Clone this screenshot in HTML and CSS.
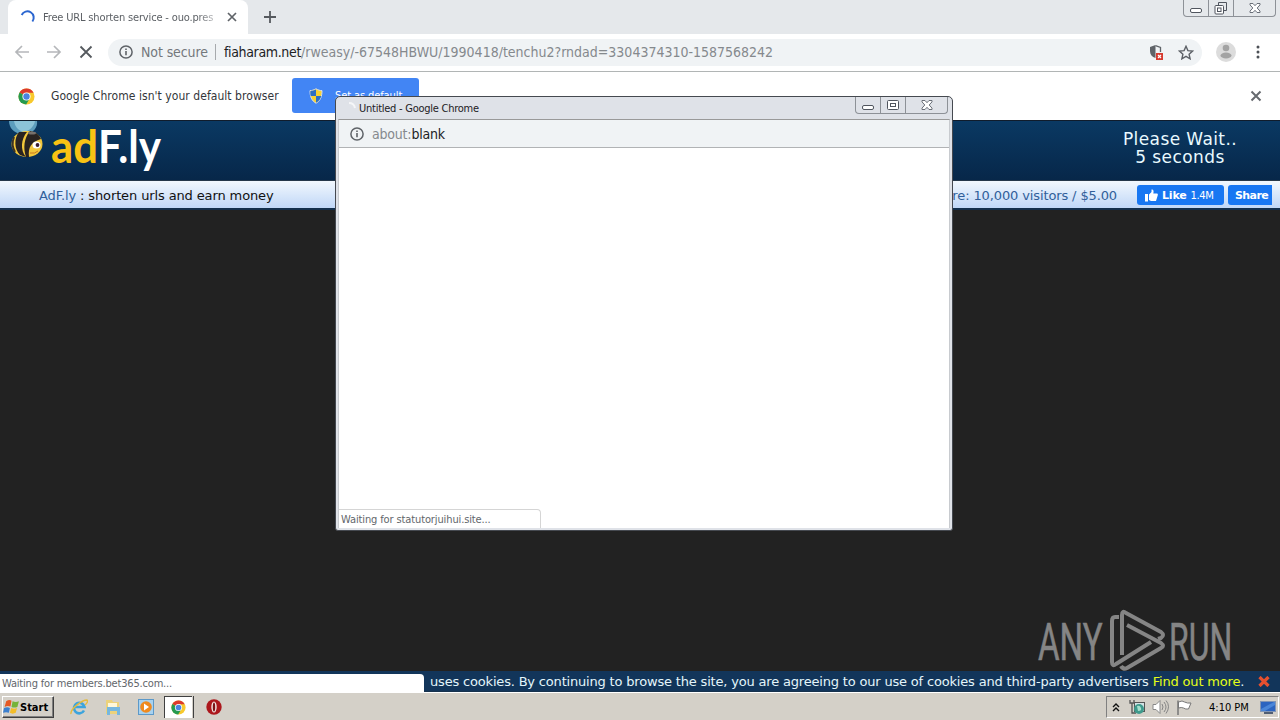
FILE: index.html
```html
<!DOCTYPE html>
<html lang="en">
<head>
    <meta charset="UTF-8">
    <title>Free URL shorten service - ouo.press</title>
    <link rel="stylesheet" href="styles.css">
</head>
<body>
    <svg width="0" height="0" class="defs">
        <defs>
            <symbol id="chrome" viewBox="0 0 18 18">
                <circle cx="9" cy="9" r="8.5" fill="#f8c92c"/>
                <path d="M9 9L1.6 4.8A8.5 8.5 0 0 1 16.5 5H9z" fill="#dc3a2c"/>
                <path d="M9 9L1.6 4.8A8.5 8.5 0 0 0 8.6 17.5L12.4 11z" fill="#259a50"/>
                <circle cx="9" cy="9" r="4.3" fill="#fff"/>
                <circle cx="9" cy="9" r="3.4" fill="#4a84e0"/>
            </symbol>
            <symbol id="info" viewBox="0 0 14 14">
                <circle cx="7" cy="7" r="6.1" fill="none" stroke="#5f6368" stroke-width="1.5"/>
                <path d="M7 6v4.3M7 3.5v1.6" stroke="#5f6368" stroke-width="1.6"/>
            </symbol>
            <symbol id="winx" viewBox="0 0 12 10">
                <path d="M1 .5h3l2 2.2 2-2.2h3v1.4L8.2 5 11 8.1v1.4H8L6 7.3 4 9.5H1V8.1L3.8 5 1 1.9z" fill="#fff" stroke="#6a6f78" stroke-width="1"/>
            </symbol>
        </defs>
    </svg>

    <div class="desktop">
        <div class="tabstrip">
            <div class="tab">
                <svg width="16" height="16" viewBox="0 0 16 16"><path d="M1.7 6A6.3 6.3 0 1 1 12.4 12.5" fill="none" stroke="#2b66d0" stroke-width="2"/></svg>
                <span class="tab-title">Free URL shorten service - ouo.pres</span>
                <svg class="tab-close" width="10" height="10" viewBox="0 0 10 10"><path d="M1 1l8 8M9 1L1 9" stroke="#5f6368" stroke-width="1.7"/></svg>
            </div>
            <svg class="new-tab" width="12" height="12" viewBox="0 0 12 12"><path d="M6 0v12M0 6h12" stroke="#55595e" stroke-width="1.8"/></svg>
            <div class="win-buttons">
                <span><svg width="12" height="5"><rect x=".5" y=".5" width="11" height="4" rx="1.5" fill="#fff" stroke="#50555e"/></svg></span>
                <span class="wb-max"><svg width="14" height="13"><path d="M4.5 3.5v-3h8v8h-3" fill="none" stroke="#50555e"/><rect x="1" y="3.5" width="8.5" height="8.5" rx="1" fill="#fff" stroke="#50555e"/><rect x="3.5" y="6" width="3.5" height="3.5" fill="none" stroke="#50555e"/></svg></span>
                <span class="wb-close"><svg width="12" height="10"><use href="#winx"/></svg></span>
            </div>
        </div>

        <div class="toolbar">
            <svg class="nav" width="16" height="14" viewBox="0 0 16 14"><path d="M15 7H2M8 1L2 7l6 6" fill="none" stroke="#b5b7ba" stroke-width="1.7"/></svg>
            <svg class="nav" width="16" height="14" viewBox="0 0 16 14"><path d="M1 7h13M8 1l6 6-6 6" fill="none" stroke="#b5b7ba" stroke-width="1.7"/></svg>
            <svg class="nav" width="16" height="14" viewBox="0 0 16 14"><path d="M2.5 1.5l11 11M13.500 1.500l-11 11" stroke="#55595e" stroke-width="1.8"/></svg>
            <div class="omnibox">
                <svg width="14" height="14"><use href="#info"/></svg>
                <span class="secure">Not secure</span>
                <span class="sep"></span>
                <span class="url"><b>fiaharam.net</b><i>/rweasy/-67548HBWU/1990418/tenchu2?rndad=3304374310-1587568242</i></span>
                <svg class="shield" width="14" height="16" viewBox="0 0 14 16"><path d="M6.5 1L1 3v4c0 3.5 2 6 5.5 7z" fill="#5f6368"/><path d="M6.5 1.7L11.5 3.5V8" fill="none" stroke="#5f6368" stroke-width="1.3"/><rect x="7" y="9" width="7" height="7" fill="#d63a2f"/><path d="M9 11l3 3M12 11l-3 3" stroke="#fff" stroke-width="1.2"/></svg>
                <svg width="16" height="15" viewBox="0 0 16 15"><path d="M8 1.3l1.9 4.3 4.7.5-3.5 3.1 1 4.6L8 11.4l-4.1 2.4 1-4.6L1.4 6.100l4.700-.5z" fill="none" stroke="#5c6066" stroke-width="1.4"/></svg>
            </div>
            <svg class="avatar" width="20" height="20"><circle cx="10" cy="10" r="10" fill="#dcdcdc"/><circle cx="10" cy="6" r="3.3" fill="#a3a3a3"/><ellipse cx="10" cy="13.5" rx="5.5" ry="3" fill="#a3a3a3"/></svg>
            <svg class="dots" width="4" height="14" fill="#4c5056"><circle cx="2" cy="2" r="1.5"/><circle cx="2" cy="7" r="1.5"/><circle cx="2" cy="12" r="1.5"/></svg>
        </div>

        <div class="infobar">
            <svg width="17" height="17"><use href="#chrome"/></svg>
            <span class="infobar-text">Google Chrome isn't your default browser</span>
            <div class="default-btn">
                <svg width="14" height="16" viewBox="0 0 14 16"><path d="M7 .8c2 1.200 4 1.800 6 1.800 0 6-1.500 10-6 12.600C2.500 12.600 1 8.600 1 2.600c2 0 4-.6 6-1.800z" fill="#f7d232" stroke="#d9e1ec"/><path d="M7 1.600V8H1.700C1.300 6.500 1.300 5 1.400 3 3.500 3 5.300 2.500 7 1.600zM7 8h5.300c-.8 3-2.500 5.300-5.300 6.700z" fill="#2d6fc4"/></svg>
                <span>Set as default</span>
            </div>
            <svg class="infobar-close" width="12" height="12" viewBox="0 0 12 12"><path d="M1.500 1.500l9 9M10.500 1.500l-9 9" stroke="#666a6f" stroke-width="2"/></svg>
        </div>

        <div class="page">
            <div class="header">
                <svg class="logo" width="165" height="59" viewBox="0 0 165 59">
                    <path d="M9 0c0 7 5 12 12 13h6c6-1 11-7 10-13z" fill="#5c9dbd"/>
                    <path d="M14 0c1 6 4 9 9 11 6-1 11-5 12-11z" fill="#8cc3d8"/>
                    <ellipse cx="27" cy="23" rx="15.500" ry="13" fill="#f2c73b"/>
                    <path d="M19 11c-5 6-5 17 1 23l6 2c-6-7-5-18 1-25z" fill="#292321"/>
                    <path d="M30 10c-6 7-7 17-4 26l3 0c-1-10 2-15 12-18-2-5-6-7-11-8z" fill="#292321"/>
                    <path d="M14 16c-2 5-2 10 1 15" fill="none" stroke="#3a3226" stroke-width="2"/>
                    <ellipse cx="32" cy="12" rx="4" ry="1.500" fill="#77706c"/>
                    <ellipse cx="36.500" cy="24" rx="4" ry="3.600" fill="#fff"/>
                    <circle cx="37.500" cy="24" r="1.900" fill="#3a1c30"/>
                    <path d="M30 32q5 1 8-2" fill="none" stroke="#c97820"/>
                    <text x="51" y="42" class="logo-ad" textLength="47" lengthAdjust="spacingAndGlyphs">ad</text>
                    <text x="98" y="42" class="logo-fly" textLength="63" lengthAdjust="spacingAndGlyphs">F.ly</text>
                </svg>
                <div class="wait">Please Wait..<br>5 seconds</div>
            </div>
            <div class="strip">
                <span class="slogan"><em>AdF.ly</em> : shorten urls and earn money</span>
                <span class="rate">re: 10,000 visitors / $5.00</span>
                <span class="fb like"><svg width="13" height="13" viewBox="0 0 13 13" fill="#fff"><path d="M0 5h3v7.500H0zM4 5.500L6.500 3V.5C8.500 0 9 2 8.300 4.500H12c1 0 1 1 .7 2L11 12H6L4 11z"/></svg><b>Like</b><small>1.4M</small></span>
                <span class="fb share"><b>Share</b></span>
            </div>
            <div class="cookies">
                <span>uses cookies. By continuing to browse the site, you are agreeing to our use of cookies and third-party advertisers</span>
                <span class="cookie-link">Find out more</span><span>.</span>
                <svg class="cookie-close" width="12" height="11" viewBox="0 0 12 11"><path d="M1.500 1l9 9M10.500 1l-9 9" stroke="#e5502f" stroke-width="3.200"/></svg>
            </div>
            <div class="status">Waiting for members.bet365.com...</div>
            <svg class="watermark" width="200" height="64" viewBox="0 0 200 64">
                <text transform="translate(2 52) scale(.62 1)" textLength="104" lengthAdjust="spacingAndGlyphs">ANY</text>
                <text transform="translate(133 52) scale(.62 1)" textLength="102" lengthAdjust="spacingAndGlyphs">RUN</text>
                <g fill="none" stroke="#858585" stroke-width="4" stroke-linejoin="round">
                    <path d="M83 9h-4q-3 0-3 4V54q0 5 4 2L115 34"/>
                    <path d="M86 47V7q0-5 4-2L125 24q4 3 0 6l-3 1"/>
                    <path d="M91 17L125 35q4 3 0 5L91 60q-4 2-6-2"/>
                </g>
            </svg>
        </div>

        <div class="taskbar">
            <div class="start">
                <svg width="17" height="16" viewBox="0 0 16 15"><path d="M3 2q3-2 5-.5L7 7Q4 6 1.500 7.500z" fill="#e65a25"/><path d="M9 2q3 1.500 6 0l-1.500 5.500q-3 1-5.500 0z" fill="#75b33b"/><path d="M1 8.500q3-1.500 5.500 0L5.500 13Q3 12 0 13z" fill="#3c80cf"/><path d="M7.700 8.500q3 1.200 5.500 0L12 13q-3 1.500-5.500 0z" fill="#f3bd28"/></svg>
                <b>Start</b>
            </div>
            <div class="quick">
                <svg width="18" height="18" viewBox="0 0 18 18"><path d="M14 12.500A5.300 5.300 0 1 1 14.500 9H5" fill="none" stroke="#3ca4dd" stroke-width="2.600"/><path d="M1 16C0 11 12 2 17 2c1.500 1-.5 4-2 5" fill="none" stroke="#e5bb3c" stroke-width="1.400"/></svg>
                <svg width="18" height="18" viewBox="0 0 18 18"><path d="M2 2h6l1 2h6v12H2z" fill="#ecd27b"/><path d="M4 5h9v4H4z" fill="#fff8da"/><path d="M3 9h13v8h-3v-4H6v4H3z" fill="#76b7df"/></svg>
                <svg width="16" height="16" viewBox="0 0 16 16"><rect x=".5" y=".5" width="15" height="15" fill="#a8d2ef" stroke="#5c99c9"/><circle cx="8" cy="8" r="5.800" fill="#ef8a1e"/><path d="M6 4.500L11 8l-5 3.500z" fill="#fff"/></svg>
                <div class="active-app"><svg width="15" height="15"><use href="#chrome"/></svg></div>
                <svg class="opera" width="16" height="16"><circle cx="8" cy="8" r="7.700" fill="#ac171c"/><ellipse cx="8" cy="8" rx="2.700" ry="5.500" fill="#f2e6e3"/><ellipse cx="8" cy="8" rx="1.200" ry="4.500" fill="#7c1216"/></svg>
            </div>
            <div class="tray">
                <svg width="8" height="9" viewBox="0 0 8 9"><path d="M1 4l3-3 3 3M1 8l3-3 3 3" fill="none" stroke="#111" stroke-width="1.400"/></svg>
                <svg class="net" width="16" height="15" viewBox="0 0 16 15"><path d="M1 0v3h4V0M3 3v10h4" fill="none" stroke="#555" stroke-width="1.300"/><rect x="5.500" y="2.500" width="10" height="9" fill="#d3e3e5" stroke="#555"/><circle cx="10" cy="9" r="5" fill="#3f9a8c"/><path d="M8 6q3-1 4 2t-3 3z" fill="#a6e0cd"/></svg>
                <svg class="vol" width="17" height="16" viewBox="0 0 17 16"><path d="M1 5.500h3L8 1.500v13l-4-4H1z" fill="#fff" stroke="#888"/><path d="M10 5q2 3 0 6M12 3q4 5 0 10M14 1.500q5 6 0 13" fill="none" stroke="#858585"/></svg>
                <svg class="flag" width="17" height="15" viewBox="0 0 17 15"><path d="M2.500 2q4-2 6 0 3 1.500 6.500 1l-2.500 6q-3 .5-5-1-2-1-5 0z" fill="#fff" stroke="#777"/><path d="M2 .5V15" stroke="#777" stroke-width="1.500"/></svg>
                <span class="clock">4:10 PM</span>
                <svg class="desk" width="16" height="13" viewBox="0 0 16 13"><rect x=".5" y=".5" width="15" height="10" fill="#2b64c0" stroke="#8195b5"/><path d="M1 8L14 1h1v3L5 10H1z" fill="#4a86d8"/><path d="M4 12h9" stroke="#243859" stroke-width="1.500"/></svg>
            </div>
        </div>

        <div class="popup">
            <div class="popup-title">
                <svg width="16" height="16" viewBox="0 0 16 16"><path d="M7 3q5 0 6 5" fill="none" stroke="#f5f6f8" stroke-width="2"/></svg>
                <span>Untitled - Google Chrome</span>
                <div class="win-buttons">
                    <span><svg width="12" height="5"><rect x=".5" y=".5" width="11" height="4" rx="1.500" fill="#fff" stroke="#50555e"/></svg></span>
                    <span class="wb-max"><svg width="12" height="10"><rect x=".5" y=".5" width="11" height="9" rx="1" fill="#fff" stroke="#50555e"/><rect x="3.500" y="3.500" width="5" height="3" fill="none" stroke="#50555e"/></svg></span>
                    <span class="wb-close"><svg width="12" height="10"><use href="#winx"/></svg></span>
                </div>
            </div>
            <div class="popup-frame">
                <div class="popup-url">
                    <svg width="14" height="14"><use href="#info"/></svg>
                    <span><i>about:</i><b>blank</b></span>
                </div>
                <div class="popup-status">Waiting for statutorjuihui.site...</div>
            </div>
        </div>
    </div>
</body>
</html>
```
FILE: styles.css
```css
* {
    box-sizing: border-box;
}

body {
    margin: 0;
    overflow: hidden;
    font-family: "DejaVu Sans Condensed", "DejaVu Sans", sans-serif;
    font-size: 11px;
    white-space: nowrap;
}

svg {
    display: block;
    flex: none;
}

i, em {
    font-style: normal;
}

.defs {
    position: absolute;
}

.desktop {
    position: relative;
    width: 1280px;
    height: 720px;
    display: flex;
    flex-direction: column;
    overflow: hidden;
}

/* browser chrome */
.tabstrip {
    height: 34px;
    display: flex;
    background: #e5e8eb;
    padding-left: 8px;
}

.tab {
    width: 240px;
    height: 34px;
    display: flex;
    align-items: center;
    background: #fff;
    border-radius: 8px 8px 0 0;
    padding-left: 12px;
}

.tab-title {
    width: 175px;
    margin-left: 7px;
    color: #5b5f64;
    letter-spacing: -0.16px;
    -webkit-mask-image: linear-gradient(to right, #000 88%, transparent 104%);
    mask-image: linear-gradient(to right, #000 88%, transparent 104%);
}

.tab-close {
    margin-left: 9px;
}

.new-tab {
    margin: 11px 0 0 16px;
}

.win-buttons {
    display: flex;
    height: 17px;
    margin-left: auto;
    border: 1px solid #8d9197;
    border-top: 0;
    border-radius: 0 0 4px 4px;
}

.win-buttons span {
    width: 25px;
    display: flex;
    align-items: center;
    justify-content: center;
    border-right: 1px solid #8d9197;
}

.win-buttons .wb-close {
    width: 41px;
    border-right: 0;
}

.tabstrip .win-buttons {
    margin-right: 4px;
}

.win-buttons span:first-child {
    align-items: flex-end;
    padding-bottom: 3px;
}

.toolbar {
    height: 38px;
    display: flex;
    align-items: center;
    padding: 0 20px 1px 14px;
    background: #fff;
    border-bottom: 1px solid #b1b5b5;
}

.nav {
    margin-right: 16px;
}

.omnibox {
    width: 1094px;
    height: 27px;
    margin-left: -2px;
    padding: 0 8px 0 11px;
    display: flex;
    align-items: center;
    background: #f0f3f5;
    border-radius: 14px;
    font-size: 14px;
    color: #74787c;
}

.secure {
    width: 68px;
    margin-left: 8px;
    letter-spacing: -0.1px;
}

.sep {
    width: 1px;
    height: 16px;
    margin: 0 8px 0 6px;
    background: #a7aaad;
}

.url b {
    color: #202124;
    font-weight: 400;
    letter-spacing: -0.35px;
}

.url i {
    color: #85898d;
}

.shield {
    margin-left: auto;
    margin-right: 15px;
}

.avatar {
    margin-left: 14px;
}

.dots {
    margin-left: auto;
}

.infobar {
    height: 48px;
    display: flex;
    align-items: center;
    padding: 0 18px;
    background: #fff;
}

.infobar-text {
    width: 229px;
    margin: 0 12px 0 16px;
    font-size: 12px;
    letter-spacing: 0.05px;
    color: #33363a;
}

.default-btn {
    width: 127px;
    height: 35px;
    display: flex;
    align-items: center;
    padding-left: 17px;
    margin-top: -1px;
    background: #4285f4;
    border-radius: 3px;
    color: #fff;
}

.default-btn span {
    margin-left: 12px;
    letter-spacing: -0.1px;
}

.infobar-close {
    margin-left: auto;
}

/* page */
.page {
    position: relative;
    height: 572px;
    display: flex;
    flex-direction: column;
    background: #222;
    font-family: "DejaVu Sans", sans-serif;
}

.header {
    height: 61px;
    display: flex;
    justify-content: space-between;
    background: linear-gradient(#0a3963, #072749);
    border-top: 1px solid #101c2c;
    border-bottom: 1px solid #26384a;
}

.logo {
    overflow: visible;
}

.logo-ad, .logo-fly {
    font-family: Lato, sans-serif;
    font-weight: 700;
    font-size: 46px;
    fill: #f9c314;
}

.logo-fly {
    fill: #fff;
}

.wait {
    width: 200px;
    padding-top: 9px;
    font-size: 17px;
    line-height: 18px;
    letter-spacing: 0.4px;
    text-align: center;
    color: #e9faff;
}

.strip {
    height: 29px;
    display: flex;
    align-items: center;
    padding: 1px 8px 0 39px;
    background: linear-gradient(#f2f8fe, #c0d7f7);
    border-bottom: 2px solid #132f4c;
    font-size: 13px;
    letter-spacing: -0.12px;
    color: #111;
}

.strip em, .rate {
    color: #315f9a;
}

.rate {
    margin-left: auto;
}

.fb {
    height: 20px;
    display: flex;
    align-items: center;
    background: #1877f2;
    border-radius: 3px;
    color: #fff;
    font-size: 11px;
    letter-spacing: -0.2px;
}

.like {
    width: 87px;
    margin: 0 4px 0 20px;
    padding-left: 8px;
}

.like b {
    margin: 0 4px;
}

.like small {
    font-size: 10px;
    letter-spacing: -0.4px;
}

.share {
    width: 44px;
    padding-left: 7px;
    border-radius: 3px 0 0 3px;
    letter-spacing: -0.6px;
}

.cookies {
    height: 21px;
    margin-top: auto;
    display: flex;
    align-items: center;
    padding-left: 430px;
    background: #12355a;
    border-bottom: 1px solid #17324d;
    font-size: 13px;
    letter-spacing: -0.18px;
    color: #e4f5fb;
}

.cookie-link {
    margin-left: 4px;
    color: #e5ff17;
}

.cookie-close {
    margin-left: auto;
    margin-right: 10px;
}

.status {
    position: absolute;
    left: 0;
    bottom: 0;
    width: 424px;
    height: 18px;
    padding-left: 2px;
    line-height: 19px;
    background: #fff;
    border-radius: 0 4px 0 0;
    color: #62666b;
    font-family: "DejaVu Sans Condensed", sans-serif;
    letter-spacing: -0.18px;
}

.watermark {
    position: absolute;
    left: 1036px;
    top: 488px;
}

.watermark text {
    font-family: Roboto, sans-serif;
    font-size: 52px;
    fill: #858585;
    stroke: #858585;
    stroke-width: 0.6px;
}

/* taskbar */
.taskbar {
    height: 28px;
    display: flex;
    background: #d4d0c8;
    border-top: 1px solid #fff;
    padding-top: 3px;
}

.start {
    width: 52px;
    height: 22px;
    margin-left: 2px;
    display: flex;
    align-items: center;
    border: 1px solid;
    border-color: #fff #404040 #404040 #fff;
    box-shadow: inset -1px -1px #808080;
}

.quick {
    height: 22px;
    display: flex;
    align-items: center;
    margin-left: 16px;
    gap: 16px;
}

.active-app {
    width: 28px;
    height: 22px;
    margin-left: -6px;
    display: flex;
    align-items: center;
    justify-content: center;
    background: #fff;
    border: 1px solid #404040;
    border-width: 1px 0 0 1px;
    box-shadow: 1px 0 #d4d0c8, 2px 0 #404040;
}

.opera {
    margin-left: -2px;
}

.tray {
    width: 173px;
    height: 22px;
    margin-left: auto;
    margin-right: 1px;
    display: flex;
    align-items: center;
    padding-left: 5px;
    border: 1px solid;
    border-color: #808080 #fff #fff #808080;
}

.net {
    margin-left: 9px;
}

.vol {
    margin-left: 7px;
}

.flag {
    margin-left: 7px;
}

.clock {
    width: 40px;
    margin-left: 16px;
    color: #000;
}

.desk {
    margin-left: 11px;
}

/* popup window */
.popup {
    position: absolute;
    left: 335px;
    top: 96px;
    width: 618px;
    height: 435px;
    display: flex;
    flex-direction: column;
    padding: 0 2px 2px;
    background: #dfe2e8;
    border: 1px solid #454950;
    border-radius: 5px 5px 3px 3px;
}

.popup-title {
    height: 22px;
    display: flex;
    align-items: center;
    padding-left: 4px;
    letter-spacing: -0.25px;
    color: #1d2024;
}

.popup-title > svg {
    margin-right: 1px;
}

.popup-title .win-buttons {
    height: 17px;
    align-self: flex-start;
    margin-right: 2px;
}

.popup-frame {
    flex: 1;
    display: flex;
    flex-direction: column;
    justify-content: space-between;
    align-items: flex-start;
    background: #fff;
    border: 1px solid #c8cbcf;
    border-top-color: #999;
    border-bottom: 0;
}

.popup-url {
    width: 100%;
    height: 28px;
    display: flex;
    align-items: center;
    padding-left: 11px;
    background: #f0f3f5;
    border-bottom: 1px solid #b1b3b5;
    font-size: 14px;
    letter-spacing: -0.2px;
}

.popup-url span {
    margin-left: 8px;
}

.popup-url i {
    color: #85898d;
}

.popup-url b {
    color: #202124;
    font-weight: 400;
}

.popup-status {
    width: 202px;
    height: 19px;
    padding-left: 2px;
    line-height: 19px;
    letter-spacing: -0.12px;
    border: 1px solid #d5d5d5;
    border-width: 1px 1px 0 0;
    border-radius: 0 4px 0 0;
    color: #62666b;
}
```
